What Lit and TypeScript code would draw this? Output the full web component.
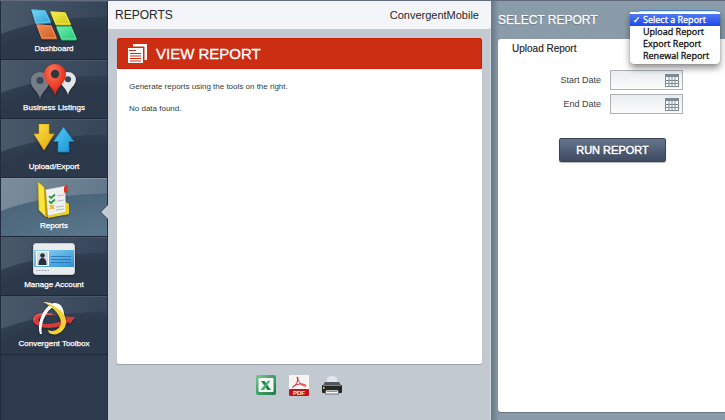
import { LitElement, html, css, svg } from "lit";
import { customElement, state } from "lit/decorators.js";
import { classMap } from "lit/directives/class-map.js";

const dashboardIcon = html`<svg viewBox="0 -5 46 39" width="46" height="39" aria-hidden="true">
  <defs>
    <linearGradient id="b" x1="0" y1="0" x2="1" y2="1"><stop offset="0" stop-color="#7fd4f4"/><stop offset="1" stop-color="#27a3dc"/></linearGradient>
    <linearGradient id="y" x1="0" y1="0" x2="1" y2="1"><stop offset="0" stop-color="#fbf04e"/><stop offset="1" stop-color="#c9c416"/></linearGradient>
    <linearGradient id="o" x1="0" y1="0" x2="1" y2="1"><stop offset="0" stop-color="#ee8a4e"/><stop offset="1" stop-color="#cf5f25"/></linearGradient>
    <linearGradient id="g" x1="0" y1="0" x2="1" y2="1"><stop offset="0" stop-color="#6af0a8"/><stop offset="1" stop-color="#2cc57e"/></linearGradient>
  </defs>
  <g stroke-linejoin="round" stroke-width="1.4">
    <path d="M1 2L14 3L19 14L5 15Z" transform="translate(.5 1)" fill="#1379ac" stroke="#1379ac"/>
    <path d="M1 2L14 3L19 14L5 15Z" fill="url(#b)" stroke="#62c3ea"/>
    <path d="M20 4L34 5L39 16L25 16Z" transform="translate(.5 1)" fill="#96900c" stroke="#96900c"/>
    <path d="M20 4L34 5L39 16L25 16Z" fill="url(#y)" stroke="#eee43f"/>
    <path d="M6 17L20 18L25 30L11 30Z" transform="translate(.5 1)" fill="#9f4011" stroke="#9f4011"/>
    <path d="M6 17L20 18L25 30L11 30Z" fill="url(#o)" stroke="#ea8a57"/>
    <path d="M26 19L40 19L45 31L31 31Z" transform="translate(0 1)" fill="#14935a" stroke="#14935a"/>
    <path d="M26 19L40 19L45 31L31 31Z" fill="url(#g)" stroke="#5ce3a0"/>
  </g>
</svg>`;

const pin = (x: number, y: number, s: number, fill: string, hole: string) => svg`
  <g transform="translate(${x} ${y}) scale(${s})">
    <path d="M0 32C-1.500 23-11 19-11 10.500A11 10.500 0 0 1 11 10.500C11 19 1.500 23 0 32Z" fill=${fill}/>
    <circle cx="0" cy="10" r="4.200" fill=${hole}/>
  </g>`;

const listingsIcon = html`<svg viewBox="0 0 46 36" width="46" height="36" aria-hidden="true">
  <defs><radialGradient id="r" cx=".4" cy=".25" r=".8"><stop offset="0" stop-color="#ff7c62"/><stop offset=".6" stop-color="#ea3a26"/><stop offset="1" stop-color="#b9200f"/></radialGradient></defs>
  ${pin(9, 8, 0.85, "#777d86", "#3d4857")}
  ${pin(37, 8, 0.72, "#e2e5e9", "#36465a")}
  ${pin(24, 0, 1, "url(#r)", "#33363d")}
</svg>`;

const transferIcon = html`<svg viewBox="0 0 42 34" width="42" height="34" aria-hidden="true">
  <defs>
    <linearGradient id="d" x1="0" y1="0" x2="1" y2="1"><stop offset="0" stop-color="#ffe34a"/><stop offset="1" stop-color="#e0a60a"/></linearGradient>
    <linearGradient id="u" x1="0" y1="0" x2="1" y2="1"><stop offset="0" stop-color="#58c9f5"/><stop offset="1" stop-color="#1593d2"/></linearGradient>
  </defs>
  <path d="M6 0H16V10H21L11 26L1 10H6Z" fill="url(#d)" stroke="#d9a417" stroke-width=".8" stroke-linejoin="round"/>
  <path d="M25 28V17.500H20.500L30.500 3L41 17.500H36V28Z" fill="url(#u)" stroke="#1c7fb5" stroke-width=".8" stroke-linejoin="round"/>
</svg>`;

const reportsIcon = html`<svg viewBox="0 0 34 37" width="34" height="37" aria-hidden="true">
  <path d="M8 9L32 23V33L10 36Z" fill="#f0d71c"/>
  <path d="M7 9L28 5L29 31L10 35Z" fill="#eef0ef" stroke="#b7bcbf" stroke-width=".5"/>
  <path d="M1 1L7 6L9 36L2 29Z" fill="#fbe53a" stroke="#d0b413" stroke-width=".7"/>
  <path d="M7 6L9 10L11 36L9 36Z" fill="#b89c10"/>
  <path d="M27 6L30 4V10L27 12Z" fill="#e2331c"/>
  <g fill="none" stroke-width="1.700"><path d="M12 15L14 17L18 13.500M12 20L14 22L18 18.500" stroke="#1f9a35"/><path d="M13 24L17 28M17 24L13 28" stroke="#f2b215"/></g>
  <path d="M20 15L27 14M20 20L27 19M19 26L27 25M19 29L27 28" stroke="#a8adb2" stroke-width=".8"/>
  <path d="M11 35L29 31L29 24L32 24V33L11 37Z" fill="#ecd01a"/>
</svg>`;

const accountIcon = html`<svg viewBox="0 0 42 32" width="42" height="32" aria-hidden="true">
  <defs><linearGradient id="c" x1="0" y1="0" x2="1" y2="1"><stop offset="0" stop-color="#8fd2f4"/><stop offset="1" stop-color="#2c92d8"/></linearGradient></defs>
  <rect x=".5" y=".5" width="41" height="31" rx="2.500" fill="#e9ecef" stroke="#c3cad2"/>
  <rect x="1" y="7" width="40" height="17" fill="url(#c)"/>
  <rect x="3" y="8" width="13" height="15" fill="#fff"/><rect x="4" y="9" width="11" height="13" fill="#d4dbe1"/>
  <circle cx="9.500" cy="12.500" r="2.300" fill="#23303f"/><path d="M5.500 22C5.500 17 7 15 9.500 15S13.500 17 13.500 22Z" fill="#23303f"/>
  <path d="M18 13.500H38M18 16.500H38M18 19.500H38" stroke="#236ea8" stroke-width=".8"/>
  <path d="M3 27.500H16" stroke="#9aa3ad" stroke-width="1" stroke-dasharray="1 .5"/>
</svg>`;

const toolboxIcon = html`<svg viewBox="0 -3 44 39" width="44" height="39" aria-hidden="true">
  <path d="M1 20C0 11 14 10 23 14C14 13 5 16 7 20C10 25 25 23 35 18L33 15.500L43 16L38 23L36.500 21C24 30 4 28 1 20Z" fill="#d43a37"/>
  <path d="M2 19C2 13 12 12 20 13.500" fill="none" stroke="#ee7570" stroke-width="1"/>
  <path d="M8 33C4 21 13 4 22 2C30 1 33 10 32 18L29 18C29 11 27 5 22 6C15 8 8 22 10 33Z" fill="#fff"/>
  <path d="M11 1C26 3 35 13 34 22C33 31 24 36 17 32L16 29C23 32 29 27 29 21C28 13 21 6 11 1Z" fill="#f6d034"/>
  <path d="M11 1C20 1 26 5 29 10C23 5 17 2 11 1Z" fill="#fff"/>
</svg>`;

const documentsIcon = html`<svg viewBox="0 0 20 20" width="20" height="20" aria-hidden="true">
  <path d="M5 0H19V16H16.500V2.500H5Z" fill="#fff"/>
  <path d="M0 4H15V19H0Z" fill="#fff"/>
  <path d="M1 6.500H8M2 9.500H13M2 12H13M2 14.500H13M2 17H13" stroke="#cc2e13" stroke-width="1.200"/>
</svg>`;

const calendarIcon = html`<svg viewBox="0 0 14 13" width="14" height="13" aria-hidden="true">
  <rect x=".5" y=".5" width="13" height="12" fill="#fff" stroke="#7d8a94"/>
  <rect x="0" y="0" width="14" height="3" fill="#7d8a94"/>
  <path d="M4 3V13M7 3V13M10 3V13M1 6.500H13M1 9.500H13" stroke="#7d8a94" stroke-width="1"/>
</svg>`;

const excelIcon = html`<svg viewBox="0 0 20 20" width="20" height="20" aria-hidden="true">
  <defs><linearGradient id="x" x1="0" y1="0" x2="1" y2="1"><stop offset="0" stop-color="#83c49a"/><stop offset=".5" stop-color="#3fa064"/><stop offset="1" stop-color="#1f7a45"/></linearGradient></defs>
  <rect width="20" height="20" rx="2" fill="url(#x)"/>
  <rect x="2.500" y="3" width="15" height="14" rx="1" fill="#f5faf6"/>
  <path d="M5 6H8.500L15 15H11.500Z" fill="#1c8247"/><path d="M14.500 5.500L11.500 6L4.500 15H8Z" fill="#49b06e"/>
</svg>`;

const pdfIcon = html`<svg viewBox="0 0 20 21" width="20" height="21" aria-hidden="true">
  <rect width="20" height="21" rx="1" fill="#f7f4f4"/>
  <path d="M8 2C10 2 9 8 4 12.500C3 13 3.500 11 8 9.500C12 8.500 17 9 17 11C15 12 9 8 8 2Z" fill="none" stroke="#e0262a" stroke-width="1"/>
  <rect y="14" width="20" height="7" rx="1" fill="#c4121a"/>
  <text x="10" y="20" text-anchor="middle" font-size="6" font-weight="700" font-family="Liberation Sans, sans-serif" fill="#fff">PDF</text>
</svg>`;

const printerIcon = html`<svg viewBox="0 0 20 19" width="20" height="19" aria-hidden="true">
  <path d="M4 8L5 3Q6 0 10 0T15 3L16 8Z" fill="#e1e6ef"/>
  <path d="M3 6H17L20 11H0Z" fill="#55585b"/>
  <rect y="9" width="20" height="8" rx="1" fill="#252729"/>
  <path d="M1 9.500H19" stroke="#7c7f82"/>
  <rect x="1" y="11" width="1.500" height="2" fill="#f0c02c"/>
  <path d="M4 14H16L17 18H3Z" fill="#f4f4f4" stroke="#333" stroke-width=".6"/>
  <path d="M5 15.500H15" stroke="#777" stroke-width=".8"/>
</svg>`;

const NAV = [
  { label: "Dashboard", icon: dashboardIcon },
  { label: "Business Listings", icon: listingsIcon },
  { label: "Upload/Export", icon: transferIcon },
  { label: "Reports", icon: reportsIcon },
  { label: "Manage Account", icon: accountIcon },
  { label: "Convergent Toolbox", icon: toolboxIcon },
];

const REPORTS = ["Select a Report", "Upload Report", "Export Report", "Renewal Report"];

@customElement("side-nav")
class SideNav extends LitElement {
  static styles = css`
    :host { display: block; background: #2d3a4d; border-right: 1px solid #222e46; border-left: 1px solid #222e40; }
    .item {
      position: relative; box-sizing: border-box; height: 59px; padding-bottom: 4px;
      display: flex; flex-direction: column; align-items: center; justify-content: flex-end;
      color: #fff; text-decoration: none; font-size: 8px; line-height: 12px; -webkit-text-stroke: .25px #fff;
      border-top: 1px solid #4b5869; border-bottom: 1px solid #1d2838;
      background:
        radial-gradient(ellipse 150px 52px at 105% 66px, #2c394b 80%, #303e51 98%, transparent 100%),
        linear-gradient(100deg, #4a596a, #344357);
    }
    .icon { flex: 1; display: flex; align-items: center; }
    .icon svg { display: block; filter: drop-shadow(0 1px 1px rgb(0 0 0 / .4)); }
    .active {
      border-top-color: #8795a2;
      background:
        radial-gradient(ellipse 150px 52px at 105% 66px, #587589 30%, #4c667b 98%, transparent 100%),
        linear-gradient(100deg, #7b8d9b, #61778a);
    }
    .active::after {
      content: ""; position: absolute; right: -1px; top: 26px;
      border: 7px solid transparent; border-right-color: #c3c9d1; border-left: 0;
      filter: drop-shadow(-1px 0 0 #33445a);
    }
  `;
  render() {
    return html`<nav>${NAV.map(
      (n) => html`<a href="#" class=${classMap({ item: true, active: n.label === "Reports" })}>
        <span class="icon">${n.icon}</span><span>${n.label}</span></a>`
    )}</nav>`;
  }
}

@customElement("report-form")
class ReportForm extends LitElement {
  @state() selected = REPORTS[0];
  static styles = css`
    :host {
      display: flex; flex-direction: column; box-sizing: border-box; padding: 0 0 8px 7px;
      background: linear-gradient(90deg, #677986, transparent 8px), #8a9caa;
    }
    header { display: flex; align-items: center; justify-content: space-between; height: 38px; padding-right: 5px; box-sizing: border-box; }
    h2 { margin: 0; font-size: 12px; line-height: 16px; font-weight: 400; color: #fff; -webkit-text-stroke: .25px #fff; text-shadow: 0 1px 1px rgb(0 0 0 / .3); }
    .picker { position: relative; width: 84px; height: 20px; }
    select { appearance: none; display: block; width: 100%; height: 20px; border: 1px solid #4486d6; border-radius: 4px; background: #f6f8fa; font: 9px "Liberation Sans", sans-serif; color: transparent; }
    .menu {
      position: absolute; z-index: 2; top: 2px; right: 0; width: 90px; box-sizing: border-box; padding: 2px 0;
      background: #fff; border-radius: 0 0 4px 4px; box-shadow: 0 4px 7px rgb(0 0 0 / .45), 0 0 1px rgb(0 0 0 / .4);
    }
    .option {
      display: flex; width: 100%; height: 12px; padding: 0; border: 0; background: none; color: #111;
      font: 400 9px/12px "Open Sans", sans-serif; white-space: nowrap; text-align: left; -webkit-text-stroke: .3px;
    }
    .tick { width: 13px; text-align: center; font-family: "DejaVu Sans", sans-serif; }
    .chosen { color: #fff; background: linear-gradient(#5079f4, #1d49ee); }
    .card { flex: 1; padding: 3px 14px; background: #fff; border-radius: 3px 0 0 3px; box-shadow: 0 1px 1px #63747f; }
    h3 { margin: 0; font-size: 10px; line-height: 14px; font-weight: 400; color: #222; -webkit-text-stroke: .15px #222; }
    form { margin-top: 14px; display: grid; grid-template-columns: 89px 73px; column-gap: 9px; row-gap: 4px; align-items: center; }
    label { text-align: right; font-size: 9px; color: #3a4147; }
    .field {
      display: flex; align-items: center; box-sizing: border-box; height: 20px; padding-right: 3px;
      border: 1px solid #abb1b7; background: linear-gradient(#e9edf0, #fbfcfc);
    }
    .field input { flex: 1; min-width: 0; border: 0; background: none; font: 9px "Liberation Sans", sans-serif; }
    .field svg { display: block; }
    .run {
      grid-column: 1 / -1; margin: 20px 0 0 47px; width: 107px; height: 24px; padding: 0;
      border: 1px solid #37435a; border-radius: 2px; color: #fff;
      background: linear-gradient(#66758b, #3e4b62); box-shadow: 0 1px 1px rgb(0 0 0 / .3);
      font: 11px/16px "Liberation Sans", sans-serif; -webkit-text-stroke: .5px #fff; text-shadow: 0 1px 1px rgb(0 0 0 / .5);
    }
  `;
  render() {
    return html`
      <header>
        <h2>SELECT REPORT</h2>
        <div class="picker">
          <select aria-label="Report type" .value=${this.selected}>${REPORTS.map((r) => html`<option>${r}</option>`)}</select>
          <div class="menu" role="listbox" aria-label="Reports">
            ${REPORTS.map((r) => html`<button type="button" role="option" aria-selected=${r === this.selected}
              class=${classMap({ option: true, chosen: r === this.selected })} @click=${() => (this.selected = r)}>
              <span class="tick">${r === this.selected ? "✓" : ""}</span><span>${r}</span></button>`)}
          </div>
        </div>
      </header>
      <section class="card">
        <h3>Upload Report</h3>
        <form>
          <label for="start">Start Date</label>
          <div class="field"><input id="start" type="text" />${calendarIcon}</div>
          <label for="end">End Date</label>
          <div class="field"><input id="end" type="text" />${calendarIcon}</div>
          <button class="run" type="button">RUN REPORT</button>
        </form>
      </section>`;
  }
}

@customElement("app-root")
class AppRoot extends LitElement {
  static styles = css`
    :host {
      display: grid; grid-template-columns: 108px minmax(0, 1fr) 234px; box-sizing: border-box;
      min-height: 100vh; border-top: 1px solid #626b7b; background: #c3c9d1;
      font-family: "Liberation Sans", sans-serif;
    }
    main { display: flex; flex-direction: column; box-shadow: inset -1px 0 #d4d9df; }
    .bar { display: flex; align-items: center; justify-content: space-between; box-sizing: border-box; height: 28px; padding: 0 12px 0 7px; background: #f4f5f8; border-radius: 0 0 3px 0; color: #24272b; }
    h1 { margin: 0; font-size: 12px; font-weight: 400; }
    .account { font-size: 11px; }
    .report { flex: 1; margin: 9px 9px 0; background: #fff; border-radius: 2px; box-shadow: 0 1px 1px #98a0a8; }
    .title { display: flex; align-items: center; gap: 8px; box-sizing: border-box; height: 31px; padding-left: 10px; background: #cc2e13; border: 1px solid #d01d08; border-radius: 2px 2px 0 0; color: #fff; }
    h2 { margin: 0; font-size: 15px; line-height: 20px; font-weight: 400; -webkit-text-stroke: .3px #fff; }
    p { margin: 0 0 10px 12px; font-size: 8px; line-height: 12px; color: #333a40; }
    .text { padding-top: 12px; }
    .exports { display: flex; align-items: center; justify-content: center; gap: 13px; height: 56px; padding: 0 2px 14px 0; box-sizing: border-box; }
    .exports button { display: block; padding: 0; border: 0; background: none; }
    .exports svg { display: block; }
  `;
  render() {
    return html`
      <side-nav></side-nav>
      <main>
        <header class="bar"><h1>REPORTS</h1><span class="account">ConvergentMobile</span></header>
        <section class="report">
          <div class="title">${documentsIcon}<h2>VIEW REPORT</h2></div>
          <div class="text"><p>Generate reports using the tools on the right.</p><p>No data found.</p></div>
        </section>
        <div class="exports">
          <button type="button" aria-label="Export to Excel">${excelIcon}</button>
          <button type="button" aria-label="Export to PDF">${pdfIcon}</button>
          <button type="button" aria-label="Print">${printerIcon}</button>
        </div>
      </main>
      <report-form></report-form>`;
  }
}
